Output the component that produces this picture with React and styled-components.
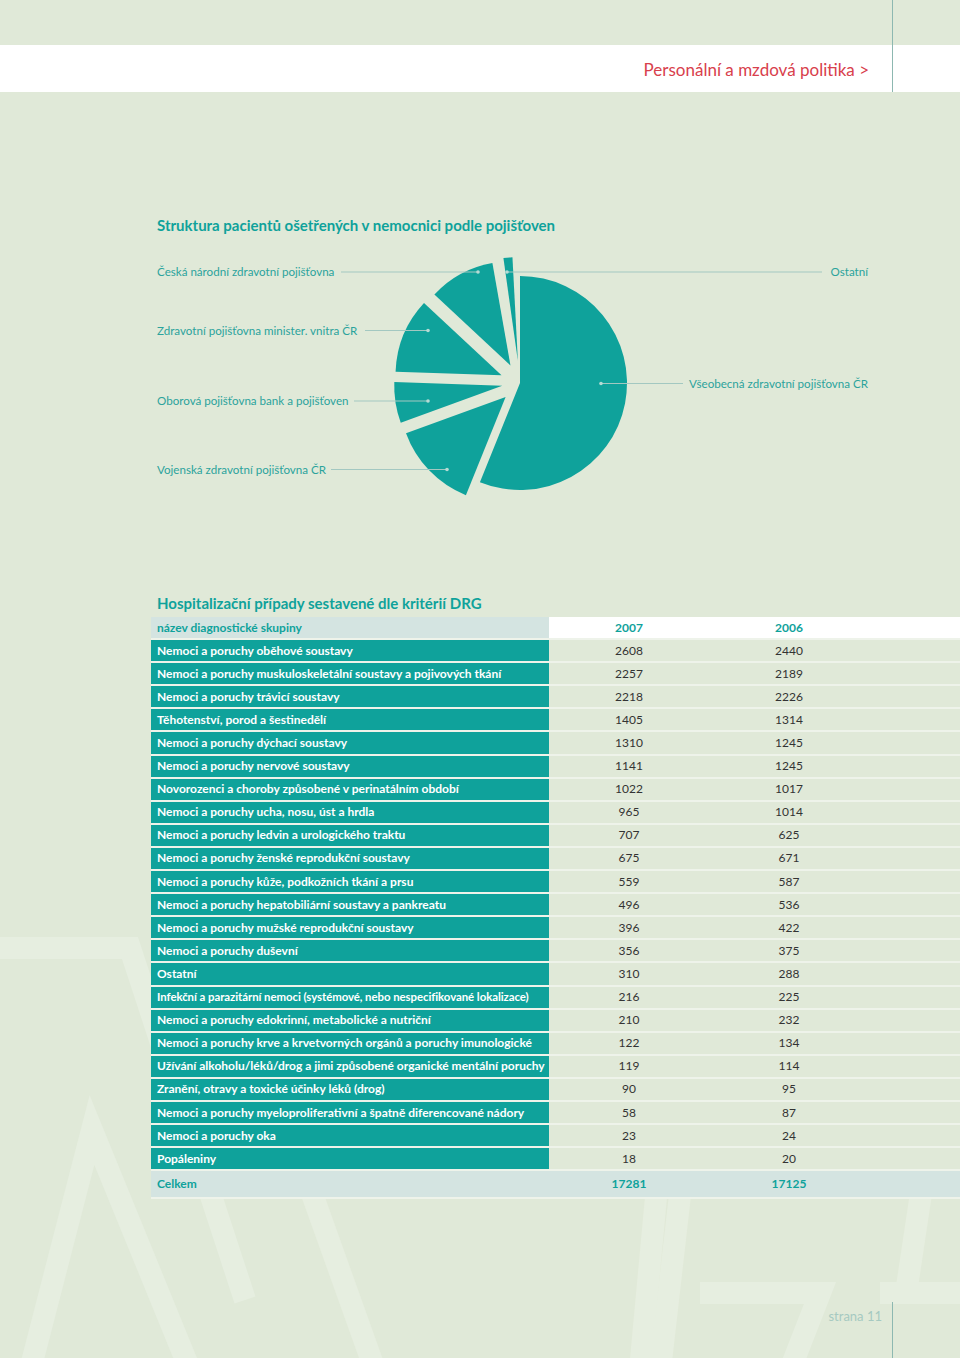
import React from 'react';
import styled, { createGlobalStyle, css } from 'styled-components';

const TEAL = '#0fa29b';
const BG = '#e0e9d8';
const RULE = '#8db8b1';

const GlobalStyle = createGlobalStyle`
  html, body {
    margin: 0;
    padding: 0;
    background: ${BG};
  }
  body {
    font-family: Lato, "Open Sans", "Liberation Sans", sans-serif;
  }
`;

const Page = styled.div`
  position: relative;
  width: 960px;
  min-height: 1358px;
  display: flex;
  flex-direction: column;
  background: ${BG};
  overflow: hidden;
`;

const Watermark = styled.svg`
  position: absolute;
  left: 0;
  top: 900px;
  width: 960px;
  height: 458px;
  z-index: 0;
  pointer-events: none;
`;

const Header = styled.header`
  position: relative;
  z-index: 1;
  display: flex;
`;

const HeaderMain = styled.div`
  width: 892px;
  padding-top: 45px;
`;

const HeaderAside = styled.div`
  flex: 1;
  padding-top: 45px;
  border-left: 1px solid ${RULE};
`;

const Band = styled.div`
  height: 47px;
  background: #fff;
  display: flex;
  align-items: center;
  justify-content: flex-end;
  padding-right: 23px;
`;

const Chapter = styled.span`
  color: #d8404c;
  font-size: 17px;
  padding-top: 2px;
`;

const Section = styled.section`
  position: relative;
  z-index: 1;
  margin-top: ${p => p.$top}px;
`;

const Title = styled.h2`
  margin: 0;
  padding-left: 157px;
  color: ${TEAL};
  font-size: 15px;
  line-height: 18px;
  font-weight: 700;
`;

const Figure = styled.svg`
  display: block;
  margin-top: 16px;
  width: 960px;
  height: 260px;
`;

const Table = styled.div`
  margin: 5px 0 0 151px;
  display: flex;
  flex-direction: column;
  gap: 2px;
  background: #eef3ea;
`;

const Row = styled.div`
  display: grid;
  grid-template-columns: 398px 160px 160px 1fr;
  height: ${p => (p.$total ? 26 : 21.1)}px;
  font-size: 12px;
  line-height: 1;
  ${p => p.$total && css`
    margin-bottom: 2px;
  `}
`;

const NameCell = styled.div`
  display: flex;
  align-items: center;
  padding-left: 6px;
  white-space: nowrap;
  overflow: hidden;
  font-weight: 700;
  background: ${p => (p.$kind === 'data' ? TEAL : '#d4e4e1')};
  color: ${p => (p.$kind === 'data' ? '#fff' : TEAL)};
  ${p => p.$tight && css`
    font-size: 11.4px;
    letter-spacing: -0.05px;
  `}
`;

const ValueCell = styled.div`
  display: flex;
  align-items: center;
  justify-content: center;
  background: ${p => (p.$kind === 'head' ? '#fff' : p.$kind === 'total' ? '#d4e4e1' : BG)};
  color: ${p => (p.$kind === 'data' ? '#333' : TEAL)};
  font-weight: ${p => (p.$kind === 'data' ? 400 : 700)};
`;

const Footer = styled.footer`
  position: relative;
  z-index: 1;
  margin-top: auto;
  display: flex;
  height: 56px;
`;

const FooterMain = styled.div`
  width: 892px;
  box-sizing: border-box;
  padding: 6px 10px 0 0;
  text-align: right;
  color: #a6c9c1;
  font-size: 13px;
`;

const FooterAside = styled.div`
  flex: 1;
  border-left: 1px solid ${RULE};
`;

const rows = [
  ['Nemoci a poruchy oběhové soustavy', 2608, 2440],
  ['Nemoci a poruchy muskuloskeletální soustavy a pojivových tkání', 2257, 2189],
  ['Nemoci a poruchy trávicí soustavy', 2218, 2226],
  ['Těhotenství, porod a šestinedělí', 1405, 1314],
  ['Nemoci a poruchy dýchací soustavy', 1310, 1245],
  ['Nemoci a poruchy nervové soustavy', 1141, 1245],
  ['Novorozenci a choroby způsobené v perinatálním období', 1022, 1017],
  ['Nemoci a poruchy ucha, nosu, úst a hrdla', 965, 1014],
  ['Nemoci a poruchy ledvin a urologického traktu', 707, 625],
  ['Nemoci a poruchy ženské reprodukční soustavy', 675, 671],
  ['Nemoci a poruchy kůže, podkožních tkání a prsu', 559, 587],
  ['Nemoci a poruchy hepatobiliární soustavy a pankreatu', 496, 536],
  ['Nemoci a poruchy mužské reprodukční soustavy', 396, 422],
  ['Nemoci a poruchy duševní', 356, 375],
  ['Ostatní', 310, 288],
  ['Infekční a parazitární nemoci (systémové, nebo nespecifikované lokalizace)', 216, 225, true],
  ['Nemoci a poruchy edokrinní, metabolické a nutriční', 210, 232],
  ['Nemoci a poruchy krve a krvetvorných orgánů a poruchy imunologické', 122, 134],
  ['Užívání alkoholu/léků/drog a jimi způsobené organické mentální poruchy', 119, 114],
  ['Zranění, otravy a toxické účinky léků (drog)', 90, 95],
  ['Nemoci a poruchy myeloproliferativní a špatně diferencované nádory', 58, 87],
  ['Nemoci a poruchy oka', 23, 24],
  ['Popáleniny', 18, 20],
];

// pie slices: angles clockwise from 12 o'clock, exploded along bisector
const CX = 520;
const CY = 133;
const slices = [
  { from: 0, to: 202, r: 107, out: 0 },
  { from: 202, to: 250, r: 106, out: 20 },
  { from: 250, to: 272, r: 108, out: 18 },
  { from: 272, to: 313, r: 106, out: 20 },
  { from: 313, to: 350, r: 104, out: 20 },
  { from: 352, to: 357, r: 104, out: 22 },
];

const rad = a => (a * Math.PI) / 180;

function slicePath({ from, to, r, out }) {
  const mid = rad((from + to) / 2);
  const ox = CX + out * Math.sin(mid);
  const oy = CY - out * Math.cos(mid);
  const x0 = ox + r * Math.sin(rad(from));
  const y0 = oy - r * Math.cos(rad(from));
  const x1 = ox + r * Math.sin(rad(to));
  const y1 = oy - r * Math.cos(rad(to));
  const large = to - from > 180 ? 1 : 0;
  return `M${ox} ${oy} L${x0} ${y0} A${r} ${r} 0 ${large} 1 ${x1} ${y1} Z`;
}

const leaders = [
  { label: 'Česká národní zdravotní pojišťovna', y: 22, x1: 341, x2: 478, dot: 478, side: 'left' },
  { label: 'Ostatní', y: 22, x1: 507, x2: 822, dot: 507, side: 'right' },
  { label: 'Zdravotní pojišťovna minister. vnitra ČR', y: 80.5, x1: 365, x2: 428, dot: 428, side: 'left' },
  { label: 'Všeobecná zdravotní pojišťovna ČR', y: 133.5, x1: 601, x2: 683, dot: 601, side: 'right' },
  { label: 'Oborová pojišťovna bank a pojišťoven', y: 151, x1: 354, x2: 428, dot: 428, side: 'left' },
  { label: 'Vojenská zdravotní pojišťovna ČR', y: 219.5, x1: 331, x2: 447, dot: 447, side: 'left' },
];

function PieChart() {
  return (
    <Figure viewBox="0 0 960 260">
      {slices.map((s, i) => (
        <path key={i} d={slicePath(s)} fill={TEAL} />
      ))}
      {leaders.map(l => (
        <g key={l.label}>
          <line x1={l.x1} y1={l.y} x2={l.x2} y2={l.y} stroke="#a3c8c1" strokeWidth="1" />
          <circle cx={l.dot} cy={l.y} r="1.8" fill="#b6dbd5" />
          <text
            x={l.side === 'left' ? 157 : 868}
            y={l.y + 4.3}
            textAnchor={l.side === 'left' ? 'start' : 'end'}
            fill="#2ba39c"
            fontSize="11.6"
            fontFamily="Lato, 'Open Sans', sans-serif"
          >
            {l.label}
          </text>
        </g>
      ))}
    </Figure>
  );
}

export default function App() {
  return (
    <>
      <GlobalStyle />
      <Page>
        <Watermark viewBox="0 0 960 458">
          <g fill="none" stroke="#e6eee0" strokeWidth="22">
            <path d="M-10 48 L130 48 L245 400" />
            <path d="M30 470 L92 230 L190 470" />
            <path d="M300 260 L375 470" />
            <path d="M665 200 L640 470" />
            <path d="M700 120 L660 470" />
            <path d="M880 200 L960 200" />
            <path d="M935 200 L905 400" />
            <path d="M700 393 L820 393 L790 470" />
            <path d="M880 393 L960 393" />
          </g>
        </Watermark>

        <Header>
          <HeaderMain>
            <Band>
              <Chapter>Personální a mzdová politika &gt;</Chapter>
            </Band>
          </HeaderMain>
          <HeaderAside>
            <Band />
          </HeaderAside>
        </Header>

        <Section $top={124}>
          <Title>Struktura pacientů ošetřených v nemocnici podle pojišťoven</Title>
          <PieChart />
        </Section>

        <Section $top={84}>
          <Title>Hospitalizační případy sestavené dle kritérií DRG</Title>
          <Table>
            <Row>
              <NameCell $kind="head">název diagnostické skupiny</NameCell>
              <ValueCell $kind="head">2007</ValueCell>
              <ValueCell $kind="head">2006</ValueCell>
              <ValueCell $kind="head" />
            </Row>
            {rows.map(([name, a, b, tight]) => (
              <Row key={name}>
                <NameCell $kind="data" $tight={tight}>{name}</NameCell>
                <ValueCell $kind="data">{a}</ValueCell>
                <ValueCell $kind="data">{b}</ValueCell>
                <ValueCell $kind="data" />
              </Row>
            ))}
            <Row $total>
              <NameCell $kind="total">Celkem</NameCell>
              <ValueCell $kind="total">17281</ValueCell>
              <ValueCell $kind="total">17125</ValueCell>
              <ValueCell $kind="total" />
            </Row>
          </Table>
        </Section>

        <Footer>
          <FooterMain>strana 11</FooterMain>
          <FooterAside />
        </Footer>
      </Page>
    </>
  );
}
